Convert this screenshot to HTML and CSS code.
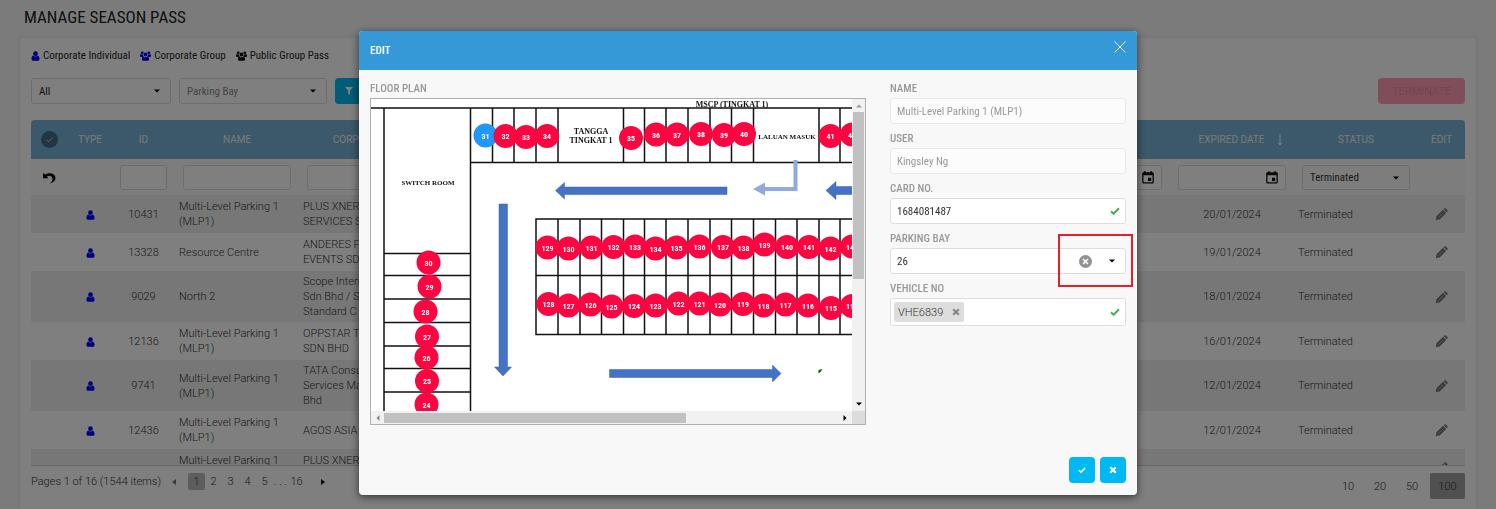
FILE: index.html
```html
<!DOCTYPE html>
<html lang="en">
<head>
<meta charset="utf-8">
<title>Manage Season Pass</title>
<link rel="stylesheet" href="styles.css">
</head>
<body>
<svg class="defs" aria-hidden="true">
  <symbol id="user" viewBox="0 0 10 12"><circle cx="5" cy="3.2" r="2.8"/><path d="M2.4 5.4C.7 5.8.2 7.400.2 9.600c0 1.400.8 2.200 2 2.200h5.600c1.200 0 2-.8 2-2.200 0-2.200-.5-3.800-2.200-4.200a3.700 3.700 0 0 1-5.200 0z"/></symbol>
  <symbol id="group" viewBox="0 0 14 12"><circle cx="2.800" cy="2" r="1.800"/><circle cx="11.200" cy="2" r="1.800"/><circle cx="7" cy="4.200" r="2.500"/><path d="M1.200 3.600C.2 3.800 0 4.800 0 6c0 .8.5 1.200 1.200 1.200h2.200c.3-.3.7-.5 1.200-.6C4 6 3.700 5.200 3.700 4.200c-.9.300-1.800 0-2.500-.6zM12.800 3.600c1 .2 1.200 1.200 1.200 2.400 0 .8-.5 1.200-1.200 1.200h-2.200c-.3-.3-.7-.5-1.200-.6.600-.6.900-1.400.9-2.400.9.300 1.800 0 2.500-.6zM4.500 6.600c-1.500.3-2 1.700-2 3.400 0 1.200.7 2 1.800 2h5.400c1.100 0 1.800-.8 1.800-2 0-1.700-.5-3.100-2-3.400a3.700 3.700 0 0 1-5 0z"/></symbol>
  <symbol id="caret" viewBox="0 0 6 4"><path d="M0 .5h6L3 3.500z"/></symbol>
  <symbol id="pencil" viewBox="0 0 14 14"><path d="M.8 13.200l.8-4.200 7-7 3.400 3.400-7 7zM9.300 1.300l.6-.6c.6-.6 1.300-.6 1.900 0l1.500 1.500c.6.600.6 1.300 0 1.900l-.6.600z"/><path d="M3.500 10.500l5.300-5.300M2 11.500l.9.900" fill="none" stroke="#ccc" stroke-width=".7"/></symbol>
  <symbol id="calendar" viewBox="0 0 12 13"><path fill-rule="evenodd" d="M2.200 0h1.400v1.200h4.800V0h1.400v1.200h.7c.8 0 1.300.6 1.300 1.300v8.700c0 .8-.5 1.300-1.300 1.300h-9C.7 12.500.2 12 .2 11.200V2.500c0-.7.5-1.300 1.300-1.300h.7zM1.500 4.300v6.900h9V4.300zM6 6.800h3.200v3.200H6z"/></symbol>
  <symbol id="tick" viewBox="0 0 10 8"><path d="M1 4.200l2.700 2.600L9 1.300" fill="none" stroke="currentColor" stroke-width="2"/></symbol>
  <symbol id="cross" viewBox="0 0 8 8"><path d="M1.200 1.200l5.600 5.600M6.800 1.200L1.200 6.800" fill="none" stroke="currentColor" stroke-width="2.200"/></symbol>
</svg>

<main class="page">
  <h1 class="title">MANAGE SEASON PASS</h1>
  <section class="card">
    <div class="legend">
      <span class="legend-item"><svg class="ico-user"><use href="#user"/></svg>Corporate Individual</span>
      <span class="legend-item"><svg class="ico-group"><use href="#group"/></svg>Corporate Group</span>
      <span class="legend-item"><svg class="ico-group black"><use href="#group"/></svg>Public Group Pass</span>
    </div>
    <div class="toolbar">
      <div class="drop drop-all"><select aria-label="Pass type"><option>All</option></select><svg class="ico-caret"><use href="#caret"/></svg></div>
      <div class="drop drop-bay"><select aria-label="Parking bay filter"><option>Parking Bay</option></select><svg class="ico-caret"><use href="#caret"/></svg></div>
      <button class="filter" aria-label="Filter"><svg viewBox="0 0 8 8"><path d="M0 0h8L5 3.600V8L3 6.500V3.600z"/></svg></button>
      <button class="terminate" disabled>TERMINATE</button>
    </div>
    <div class="grid-wrap">
      <table class="grid">
        <colgroup><col class="c-check"><col class="c-type"><col class="c-id"><col class="c-wide"><col class="c-wide"><col><col class="c-wide"><col class="c-wide"><col class="c-wide"><col class="c-edit"></colgroup>
        <thead>
          <tr class="head">
            <th><svg class="ico-all" viewBox="0 0 17 17"><circle cx="8.500" cy="8.500" r="8.500"/><path d="M5.500 8.700l2 2 4-4"/></svg></th>
            <th>TYPE</th><th>ID</th><th>NAME</th><th>CORPORATE</th><th></th><th></th>
            <th><span class="sorted">EXPIRED DATE<svg viewBox="0 0 6 12"><path d="M3 0v11M1 9l2 2 2-2"/></svg></span></th>
            <th>STATUS</th><th>EDIT</th>
          </tr>
          <tr class="filters">
            <td><button class="plain" aria-label="Reset"><svg class="ico-undo" viewBox="0 0 13 12"><path d="M0 .8v5.500h5.500L3.700 4.500c3-1.600 5.900-.2 5.900 2.600 0 1.500-.8 2.900-2.600 4.300 3.500-.7 5.500-2.700 5.500-5.300C12.500 1.800 6.600-.2 2 2.800z"/></svg></button></td>
            <td></td>
            <td><input class="box" aria-label="Filter ID"></td>
            <td><input class="box" aria-label="Filter name"></td>
            <td><input class="box" aria-label="Filter corporate"></td>
            <td></td>
            <td><div class="date"><input class="box" aria-label="Start date"><svg><use href="#calendar"/></svg></div></td>
            <td><div class="date"><input class="box" aria-label="Expired date"><svg><use href="#calendar"/></svg></div></td>
            <td><div class="drop"><select aria-label="Status"><option>Terminated</option></select><svg class="ico-caret"><use href="#caret"/></svg></div></td>
            <td></td>
          </tr>
        </thead>
        <tbody>
          <tr><td></td><td><svg class="ico-user"><use href="#user"/></svg></td><td>10431</td><td class="l">Multi-Level Parking 1<br>(MLP1)</td><td class="l">PLUS XNERGY<br>SERVICES SDN</td><td></td><td></td><td>20/01/2024</td><td class="l">Terminated</td><td><button class="plain" aria-label="Edit"><svg class="ico-pencil"><use href="#pencil"/></svg></button></td></tr>
          <tr><td></td><td><svg class="ico-user"><use href="#user"/></svg></td><td>13328</td><td class="l">Resource Centre</td><td class="l">ANDERES FOUR<br>EVENTS SDN</td><td></td><td></td><td>19/01/2024</td><td class="l">Terminated</td><td><button class="plain" aria-label="Edit"><svg class="ico-pencil"><use href="#pencil"/></svg></button></td></tr>
          <tr><td></td><td><svg class="ico-user"><use href="#user"/></svg></td><td>9029</td><td class="l">North 2</td><td class="l">Scope International<br>Sdn Bhd / S<br>Standard C</td><td></td><td></td><td>18/01/2024</td><td class="l">Terminated</td><td><button class="plain" aria-label="Edit"><svg class="ico-pencil"><use href="#pencil"/></svg></button></td></tr>
          <tr><td></td><td><svg class="ico-user"><use href="#user"/></svg></td><td>12136</td><td class="l">Multi-Level Parking 1<br>(MLP1)</td><td class="l">OPPSTAR TECH<br>SDN BHD</td><td></td><td></td><td>16/01/2024</td><td class="l">Terminated</td><td><button class="plain" aria-label="Edit"><svg class="ico-pencil"><use href="#pencil"/></svg></button></td></tr>
          <tr><td></td><td><svg class="ico-user"><use href="#user"/></svg></td><td>9741</td><td class="l">Multi-Level Parking 1<br>(MLP1)</td><td class="l">TATA Consultancy<br>Services Malaysia<br>Bhd</td><td></td><td></td><td>12/01/2024</td><td class="l">Terminated</td><td><button class="plain" aria-label="Edit"><svg class="ico-pencil"><use href="#pencil"/></svg></button></td></tr>
          <tr><td></td><td><svg class="ico-user"><use href="#user"/></svg></td><td>12436</td><td class="l">Multi-Level Parking 1<br>(MLP1)</td><td class="l">AGOS ASIA</td><td></td><td></td><td>12/01/2024</td><td class="l">Terminated</td><td><button class="plain" aria-label="Edit"><svg class="ico-pencil"><use href="#pencil"/></svg></button></td></tr>
          <tr><td></td><td></td><td></td><td class="l">Multi-Level Parking 1<br>(MLP1)</td><td class="l">PLUS XNERGY<br>SERVICES SDN</td><td></td><td></td><td></td><td></td><td><button class="plain" aria-label="Edit"><svg class="ico-pencil"><use href="#pencil"/></svg></button></td></tr>
        </tbody>
      </table>
    </div>
    <nav class="pager" aria-label="Pages">
      <span class="count">Pages 1 of 16 (1544 items)</span>
      <button class="step prev" aria-label="Previous"><svg viewBox="0 0 4 6"><path d="M4 0v6L0 3z"/></svg></button>
      <button class="pg on">1</button><button class="pg">2</button><button class="pg">3</button><button class="pg">4</button><button class="pg">5</button><span class="dots">. . .</span><button class="pg">16</button>
      <button class="step next" aria-label="Next"><svg viewBox="0 0 4 6"><path d="M0 0v6l4-3z"/></svg></button>
      <div class="sizes"><button>10</button><button>20</button><button>50</button><button class="on">100</button></div>
    </nav>
  </section>
</main>

<div class="backdrop">
  <section class="dialog" role="dialog" aria-modal="true" aria-labelledby="dlg-title">
    <header class="dlg-head">
      <h2 id="dlg-title">EDIT</h2>
      <button class="close" aria-label="Close"><svg viewBox="0 0 12 12"><path d="M.5.5l11 11M11.500.5l-11 11"/></svg></button>
    </header>
    <div class="dlg-body">
      <div class="plan-col">
        <div class="label">FLOOR PLAN</div>
        <div class="plan">
          <svg class="plan-map" role="img" aria-label="Floor plan">
            <g transform="translate(-371 -99)">
              <path class="wall" d="M371 108h482M384 108v304M470.500 108v304M470 162.500h383M492.500 108v54M514 108v54M536 108v54M558 108v54M623.500 108v54M644.500 108v54M666 108v54M688 108v54M710 108v54M731.500 108v54M753.500 108v54M819 108v54M840 108v54"/>
              <path class="wall" d="M384 253.500h86M384 275.500h86M384 299h86M384 322.500h86M384 346h86M384 368.500h86M384 392h86"/>
              <path class="wall" d="M853 219H536v115.500h317M536 275.500h317M558 219v115M580 219v115M601.500 219v115M623.500 219v115M644.500 219v115M666 219v115M688 219v115M710 219v115M731.500 219v115M753.500 219v115M775.500 219v115M797 219v115M819 219v115M840 219v115"/>
              <path class="route" d="M555.500 190.500l9-8v4.500H727v7.500H564.500v4.500zM826 190.500l10-9v5h18v8h-18v5zM499 204h8.500v163h4l-8.500 9-8.500-9h4.500zM609.500 369.500h163v-4.500l8.500 8.500-8.500 8.500v-4.500h-163z"/>
              <path class="route-light" d="M793.500 160h4v31H765v4.500l-12-6.500 12-6.500v4.500h28.500z"/>
              <path d="M818.500 370l4-1-2 3-2 1.500z" fill="#0e5c0e"/>
              <g class="room">
                <text x="732" y="107">MSCP (TINGKAT 1)</text><text class="tight" x="428" y="185">SWITCH ROOM</text><text x="591" y="134">TANGGA</text><text x="591" y="143">TINGKAT 1</text><text class="tight" x="787" y="139">LALUAN MASUK</text>
              </g>
              <g id="bays"></g>
            </g>
          </svg>
          <div class="vbar"><svg viewBox="0 0 6 4"><path d="M0 3.500h6L3 .5z" fill="#999"/></svg><i></i><svg class="end"><use href="#caret"/></svg></div>
          <div class="hbar"><svg viewBox="0 0 4 6"><path d="M3.500 0v6l-3-3z" fill="#888"/></svg><i></i><svg class="end" viewBox="0 0 4 6"><path d="M.5 0v6l3-3z"/></svg></div>
          <div class="corner"></div>
        </div>
      </div>
      <div class="form">
        <div class="field"><label class="label" for="f-name">NAME</label><input class="box" id="f-name" value="Multi-Level Parking 1 (MLP1)" disabled></div>
        <div class="field"><label class="label" for="f-user">USER</label><input class="box" id="f-user" value="Kingsley Ng" disabled></div>
        <div class="field"><label class="label" for="f-card">CARD NO.</label><div class="control"><input id="f-card" value="1684081487"><svg class="ok"><use href="#tick"/></svg></div></div>
        <div class="field"><label class="label" for="f-bay">PARKING BAY</label><div class="control">
          <input id="f-bay" value="26">
          <button class="plain clear" aria-label="Clear"><svg viewBox="0 0 13 13"><circle cx="6.500" cy="6.500" r="6.500" fill="#929292"/><path d="M4 4l5 5M9 4l-5 5" stroke="#fff" stroke-width="1.600"/></svg></button>
          <button class="plain open" aria-label="Open list"><svg class="ico-caret"><use href="#caret"/></svg></button>
          <span class="highlight"></span>
        </div></div>
        <div class="field"><label class="label" for="f-veh">VEHICLE NO</label><div class="control tags"><span class="tag">VHE6839<button class="plain" aria-label="Remove VHE6839"><svg><use href="#cross"/></svg></button></span><input id="f-veh"><svg class="ok"><use href="#tick"/></svg></div></div>
      </div>
    </div>
    <footer class="dlg-foot">
      <button class="act" aria-label="Save"><svg><use href="#tick"/></svg></button>
      <button class="act" aria-label="Cancel"><svg><use href="#cross"/></svg></button>
    </footer>
  </section>
</div>
<script src="bays.js"></script>
</body>
</html>
```
FILE: styles.css
```css
* { box-sizing: border-box; }
body { margin: 0; background: #f6f6f6; color: #222; font: 11px/15px "Roboto Condensed", Roboto, sans-serif; overflow: hidden; }
button, input, select { font: inherit; color: inherit; margin: 0; padding: 0; border: 0; background: none; min-width: 0; }
svg { display: block; flex: none; }
h1, h2 { margin: 0; font-weight: 400; }
.defs { position: absolute; width: 0; height: 0; }
.plain { display: inline-flex; vertical-align: middle; }

.page { padding: 7px 20px 20px; }
.title { font-size: 17px; line-height: 20px; padding-left: 4px; margin-bottom: 11px; }
.card { background: #fff; border-radius: 4px; padding: 10px 11px 16px; box-shadow: 0 0 4px #ddd; }
.legend { display: flex; gap: 10px; line-height: 16px; }
.legend-item { display: flex; align-items: center; gap: 3px; }
.ico-user { width: 9px; height: 10px; fill: #00f; display: inline-block; vertical-align: middle; }
.ico-group { width: 11px; height: 10px; fill: #00f; }
.ico-group.black { fill: #111; }
.ico-caret { width: 6px; height: 4px; fill: #000; }

.toolbar { display: flex; gap: 8px; margin: 14px 0 16px; height: 26px; }
.drop { position: relative; height: 26px; display: flex; align-items: center; }
.drop select { appearance: none; width: 100%; height: 100%; padding: 0 7px; border: 1px solid #dadada; border-radius: 3px; }
.drop .ico-caret { position: absolute; right: 11px; }
.drop-all { width: 140px; }
.drop-bay { width: 148px; color: #888; }
.filter { width: 27px; border-radius: 4px; background: #00b9ef; display: flex; align-items: center; justify-content: center; }
.filter svg { width: 8px; height: 8px; fill: #fff; }
.terminate { margin-left: auto; width: 87px; border-radius: 4px; background: #ff9db4; color: #e0809a; font: 300 11px/15px Roboto, sans-serif; }

.grid-wrap { height: 346px; overflow: hidden; border-radius: 4px 4px 0 0; border-bottom: 1px solid #ccc; }
.grid { width: 100%; table-layout: fixed; border-collapse: collapse; font: 300 11px/15px Roboto, sans-serif; color: #333; }
.c-check { width: 37px; } .c-type { width: 44px; } .c-id { width: 63px; } .c-wide { width: 124px; } .c-edit { width: 47px; }
.head { height: 39px; background: #76b2d6; color: #f4f4f4; }
.grid th { padding: 0; font-weight: 400; font-size: 10px; }
.grid td { height: 38px; padding: 3px 4px; text-align: center; }
.grid td.l { text-align: left; }
.grid tbody tr:nth-child(odd) { background: #efefef; }
.grid .filters { background: #fbfbfb; }
.grid .filters td { height: 36px; padding: 6px 8px 5px; }
.grid .filters .drop, .grid .filters .box { height: 25px; }
.filters select { font: 400 11px/15px "Roboto Condensed", Roboto, sans-serif; }
.ico-all { width: 17px; height: 17px; margin: 0 auto; fill: #446b84; stroke: #b9d6e8; }
.ico-all circle { stroke: none; }
.sorted { display: inline-flex; gap: 13px; align-items: center; margin-left: 18px; }
.sorted svg { width: 6px; height: 12px; fill: none; stroke: #fff; }
.ico-undo { width: 13px; height: 12px; }
.ico-pencil { width: 13px; height: 13px; fill: #777; }
.box { width: 100%; height: 26px; padding: 0 6px; border: 1px solid #dadada; border-radius: 3px; background: #fff; }
.date { position: relative; display: flex; align-items: center; }
.date svg { position: absolute; right: 8px; width: 12px; height: 13px; fill: #111; }

.pager { display: flex; align-items: flex-start; margin-top: 7px; color: #333; font: 300 11px/17px Roboto, sans-serif; }
.count { width: 129px; white-space: nowrap; }
.step { height: 17px; display: flex; align-items: center; }
.step svg { width: 4px; height: 6px; }
.prev { margin: 0 12px; } .prev svg { fill: #777; }
.next { margin-left: 16px; }
.pg { width: 17px; height: 17px; }
.pg.on { background: #bbb; border-radius: 2px; }
.dots { width: 15px; text-align: center; white-space: nowrap; }
.sizes { display: flex; margin-left: auto; }
.sizes button { width: 32px; height: 26px; }
.sizes .on { width: 35px; margin-left: 2px; background: #a0a0a0; border-radius: 2px; }

.backdrop { position: fixed; inset: 0; padding: 31px 16px 0; background: rgba(0, 0, 0, .5); }
.dialog { width: 100%; max-width: 778px; margin: 0 auto; background: #f8f8f8; border-radius: 4px; box-shadow: 0 2px 8px rgba(0, 0, 0, .6); }
.dlg-head { display: flex; justify-content: space-between; padding: 10px 11px; height: 39px; background: #3599d8; color: #fff; border-radius: 4px 4px 0 0; }
.dlg-head h2 { font-size: 11px; line-height: 19px; font-weight: 500; }
.close { align-self: flex-start; }
.close svg { width: 12px; height: 12px; fill: none; stroke: #fff; }
.dlg-body { display: flex; gap: 24px; padding: 10px 11px 0; }
.plan-col { flex: 1; min-width: 0; }
.form { width: 236px; display: flex; flex-direction: column; gap: 6px; }
.label { display: block; color: #999; font-weight: 500; line-height: 18px; }
.plan { display: grid; grid-template-columns: 1fr 13px; grid-template-rows: 312px 13px; border: 1px solid #b0b0b0; background: #fff; }
.plan-map { width: 100%; height: 100%; }
.wall { fill: none; stroke: #111; stroke-width: 1.500; }
.route { fill: #4472c4; stroke: #3a60a8; stroke-width: .5; }
.route-light { fill: #8faadc; }
.room { font: bold 8px "Liberation Serif", serif; text-anchor: middle; fill: #111; }
.room .tight { font-size: 7px; }
.bay { font: bold 8px "Roboto Condensed", Roboto, sans-serif; text-anchor: middle; fill: #fff; }
.bay circle { fill: #fb0640; }
.bay.free circle { fill: #2196fb; }
.vbar, .hbar { background: #f1f1f1; display: flex; align-items: center; }
.vbar { flex-direction: column; padding: 5px 0; }
.vbar i { width: 11px; height: 167px; background: #c1c1c1; margin-top: 4px; }
.vbar svg { width: 6px; height: 4px; }
.hbar { padding: 0 5px; }
.hbar i { width: 302px; height: 10px; background: #c1c1c1; margin-left: 4px; }
.hbar svg { width: 4px; height: 6px; }
.vbar .end { margin-top: auto; }
.hbar .end { margin-left: auto; }
.corner { background: #dcdcdc; }

.form .box:disabled { background: #fcfcfc; color: #999; border-color: #e8e8e8; }
.control { position: relative; display: flex; align-items: center; height: 26px; padding: 0 5px 0 6px; background: #fff; border: 1px solid #ddd; border-radius: 3px; color: #333; }
.control input { flex: 1; height: 100%; outline: 0; }
.ok { width: 10px; height: 8px; color: #4caf50; }
.clear { margin-right: 17px; }
.clear svg { width: 13px; height: 13px; }
.open { margin-right: 5px; }
.highlight { position: absolute; right: -8px; top: -15px; width: 75px; height: 53px; border: 2px solid #e3202c; pointer-events: none; }
.tags { height: 28px; padding-left: 3px; }
.tag { display: flex; align-items: center; justify-content: space-between; height: 20px; width: 70px; padding: 0 4px; background: #ddd; border-radius: 2px; font: 300 11px/15px Roboto, sans-serif; }
.tag svg { width: 8px; height: 8px; color: #888; }
.dlg-foot { display: flex; justify-content: flex-end; gap: 5px; padding: 32px 11px 12px; }
.act { width: 26px; height: 26px; border-radius: 4px; background: #00b9f2; color: #fff; display: flex; align-items: center; justify-content: center; }
.act svg { width: 8px; height: 8px; }
```
FILE: bays.js
```js
// Bay number, centre x, centre y on the floor plan.
const bays = [
  [31, 485.5, 135.5], [32, 505.5, 136], [33, 526, 137], [34, 547, 136],
  [35, 631, 138], [36, 656, 134.5], [37, 677, 134.5], [38, 701, 134], [39, 724, 135], [40, 744, 134], [41, 830.5, 136], [42, 852, 134.5],
  [30, 428.5, 262.5], [29, 429.5, 286.5], [28, 425.5, 311.5], [27, 427, 336.5], [26, 426.5, 357.5], [25, 427, 381], [24, 426.5, 404.5],
  [129, 547.5, 247.5], [130, 568.5, 248.5], [131, 591.5, 247.5], [132, 613.5, 247], [133, 635, 246.5], [134, 655.5, 248.5], [135, 676.5, 247.5], [136, 699.5, 246.5], [137, 723, 247], [138, 743.5, 247.5], [139, 764.5, 244.5], [140, 787, 247], [141, 809, 247], [142, 830.5, 248.5], [143, 852, 246.5],
  [128, 548.5, 304], [127, 568.5, 305.5], [126, 590.5, 304.5], [125, 611.5, 306.5], [124, 634, 306], [123, 655.5, 305.5], [122, 678.5, 303.5], [121, 699.5, 303.5], [120, 720, 304.5], [119, 743, 304], [118, 763.5, 305.5], [117, 785.5, 304.5], [116, 808, 305.5], [115, 831, 308], [114, 852, 306]
];
document.getElementById("bays").innerHTML = bays.map(([n, x, y]) =>
  `<g class="bay${n === 31 ? " free" : ""}"><circle cx="${x}" cy="${y}" r="12"/><text x="${x}" y="${y + 3}">${n}</text></g>`
).join("");
```
